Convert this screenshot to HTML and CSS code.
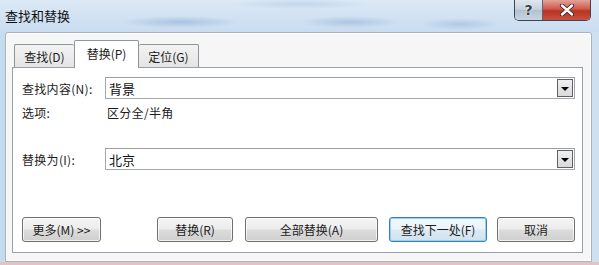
FILE: index.html
```html
<!DOCTYPE html>
<html lang="zh-CN">
<head>
<meta charset="utf-8">
<title>查找和替换</title>
<link rel="stylesheet" href="styles.css">
</head>
<body>
<div class="desk">
  <div class="titlebar">
    <div class="title">查找和替换</div>
    <div class="controls">
      <div class="ctl help">?</div>
      <div class="ctl close">
        <svg width="16" height="12" viewBox="0 0 16 12"><path d="M3 1.5 L13 10.5 M13 1.5 L3 10.5" stroke="#4a2020" stroke-width="4.2" stroke-linecap="round"/><path d="M3 1.5 L13 10.5 M13 1.5 L3 10.5" stroke="#ffffff" stroke-width="2.4" stroke-linecap="round"/></svg>
      </div>
    </div>
  </div>
  <div class="frame">
    <div class="tabs">
      <div class="tab t1">查找(D)</div>
      <div class="tab sel">替换(P)</div>
      <div class="tab t3">定位(G)</div>
    </div>
    <div class="panel">
      <div class="row r1">
        <div class="lbl">查找内容(N):</div>
        <div class="combo"><span class="val">背景</span><span class="drop"></span></div>
      </div>
      <div class="row r2">
        <div class="lbl">选项:</div>
        <div class="opt">区分全/半角</div>
      </div>
      <div class="row r3">
        <div class="lbl">替换为(I):</div>
        <div class="combo"><span class="val">北京</span><span class="drop"></span></div>
      </div>
      <div class="buttons">
        <div class="btn more">更多(M) &gt;&gt;</div>
        <div class="btn replace">替换(R)</div>
        <div class="btn all">全部替换(A)</div>
        <div class="btn next">查找下一处(F)</div>
        <div class="btn cancel">取消</div>
      </div>
    </div>
  </div>
</div>
</body>
</html>
```
FILE: styles.css
```css
* { box-sizing: border-box; }
html, body { margin: 0; padding: 0; }
body {
  width: 599px;
  height: 265px;
  overflow: hidden;
  font-family: "Noto Sans CJK SC", "Noto Sans", sans-serif;
  font-size: 12px;
  color: #1c1c1c;
}
.desk {
  width: 599px;
  height: 265px;
  background:
    linear-gradient(to bottom, rgba(0,0,0,0) 262px, #e4c3c6 262px),
    linear-gradient(to right, #c5dbef 0, #d3e3f3 50%, #cfe0f1 100%);
  display: flex;
  flex-direction: column;
}
.titlebar {
  height: 32px;
  display: flex;
  align-items: flex-start;
  padding-right: 8px;
  background:
    radial-gradient(ellipse 60px 6px at 180px 22px, rgba(120,160,205,0.45), rgba(0,0,0,0)),
    radial-gradient(ellipse 50px 6px at 350px 22px, rgba(120,160,205,0.4), rgba(0,0,0,0)),
    radial-gradient(ellipse 40px 6px at 460px 24px, rgba(120,160,205,0.35), rgba(0,0,0,0)),
    radial-gradient(ellipse 70px 5px at 300px 4px, rgba(150,180,215,0.35), rgba(0,0,0,0)),
    linear-gradient(to bottom, #dce9f6, #c9dcf0);
}
.title {
  padding: 8px 0 0 5px;
  font-size: 13px;
  line-height: 16px;
  color: #111;
}
.controls {
  margin-left: auto;
  display: flex;
  height: 21px;
  border: 1px solid #3d4650;
  border-top: none;
  border-radius: 0 0 5px 5px;
  overflow: hidden;
}
.ctl {
  height: 20px;
  display: flex;
  align-items: center;
  justify-content: center;
}
.help {
  width: 28px;
  background: linear-gradient(to bottom, #dfe7ef, #c3cfdc 50%, #b2c1d1 51%, #c7d4e1);
  border-right: 1px solid #5a6672;
  font-family: "DejaVu Sans", sans-serif;
  font-weight: bold;
  font-size: 14px;
  color: #3a3f46;
  text-shadow: 0 0 2px #fff, 0 0 1px #fff;
}
.close {
  width: 47px;
  background: linear-gradient(to bottom, #e0a49a, #d0574a 45%, #b83323 55%, #c9503f);
}
.frame {
  margin: 0 7px 0 5px;
  height: 230px;
  background: #f6f6f6;
  border: 1px solid #a9b1ba;
  border-radius: 3px 3px 0 0;
  padding: 7px 8px 0 6px;
  box-shadow: inset 0 0 0 1px #ffffff;
}
.tabs {
  display: flex;
  height: 27px;
  padding-left: 2px;
  align-items: flex-end;
  position: relative;
  z-index: 1;
}
.tab {
  height: 23px;
  border: 1px solid #8e949c;
  border-bottom: none;
  border-radius: 2px 2px 0 0;
  background: linear-gradient(to bottom, #f3f3f3, #e4e4e4);
  display: flex;
  align-items: center;
  justify-content: center;
  font-size: 12px;
}
.t1 { width: 60px; border-right: none; }
.t3 { width: 60px; border-left: none; }
.tab.sel {
  width: 65px;
  height: 28px;
  background: #ffffff;
  margin-bottom: -1px;
  padding-bottom: 3px;
  font-size: 12px;
}
.panel {
  height: 186px;
  background: #ffffff;
  border: 1px solid #9aa0a8;
  padding: 9px 7px 0 9px;
}
.row {
  display: grid;
  grid-template-columns: 83px 1fr;
  align-items: center;
}
.r1 { height: 22px; }
.r2 { height: 20px; margin-top: 3px; }
.r3 { height: 22px; margin-top: 26px; }
.lbl { white-space: nowrap; letter-spacing: 0.3px; }
.opt { padding-left: 2px; letter-spacing: 0.3px; }
.combo {
  height: 22px;
  border: 1px solid #a4a8ad;
  border-top-color: #9b9fa4;
  display: flex;
  align-items: center;
  padding: 1px 1px 1px 3px;
  background: #fff;
}
.val { flex: 1; font-size: 13px; color: #111; }
.drop {
  width: 16px;
  height: 18px;
  border: 1px solid #5e6266;
  background: linear-gradient(to bottom, #f0f0f0, #d9d9d9);
  display: flex;
  align-items: center;
  justify-content: center;
  padding-top: 2px;
}
.drop::before {
  content: "";
  border-left: 4px solid transparent;
  border-right: 4px solid transparent;
  border-top: 4px solid #000;
}
.buttons {
  display: flex;
  margin-top: 47px;
  height: 25px;
}
.btn {
  height: 25px;
  border: 1px solid #6f6f6f;
  border-radius: 3px;
  background: linear-gradient(to bottom, #f5f5f5, #ececec 48%, #dcdcdc 52%, #cfcfcf);
  box-shadow: inset 0 0 0 1px rgba(255,255,255,0.7);
  display: flex;
  align-items: center;
  justify-content: center;
  font-size: 12px;
  white-space: nowrap;
}
.more { width: 79px; }
.replace { width: 76px; margin-left: 56px; }
.all { width: 133px; margin-left: 12px; }
.next {
  width: 98px;
  margin-left: 11px;
  border-color: #3c7fb1;
  box-shadow: inset 0 0 0 1px #8ed3f5;
  background: linear-gradient(to bottom, #f2f8fc, #eaf4fa 48%, #dceaf4 52%, #d0e2ef);
}
.cancel { width: 78px; margin-left: 10px; }
```
